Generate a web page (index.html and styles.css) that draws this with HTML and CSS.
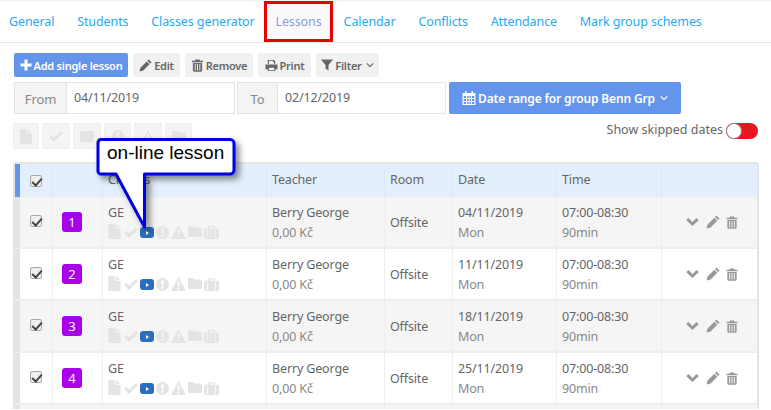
FILE: index.html
```html
<!DOCTYPE html>
<html lang="en">
<head>
<meta charset="utf-8">
<title>Lessons</title>
<link rel="stylesheet" href="styles.css">
</head>
<body>
<svg class="defs" width="0" height="0" aria-hidden="true">
  <symbol id="i-plus" viewBox="0 0 12 12"><path d="M4.5 0.5h3v4h4v3h-4v4h-3v-4h-4v-3h4z"/></symbol>
  <symbol id="i-pencil" viewBox="0 0 14 14"><path d="M10.500 .5 13.500 3.500 12 5 9 2zM8.300 2.700 11.300 5.700 4.600 12.400 .5 13.500l1.100-4.100z"/></symbol>
  <symbol id="i-trash" viewBox="0 0 12 14"><path d="M4 0.5h4l1 1.500h3v1.400H0V2h3zM1 4.200h10v8.300c0 .8-.6 1.300-1.200 1.300H2.200C1.600 13.800 1 13.300 1 12.500zM3 5.500v7h1v-7zm2.500 0v7h1v-7zm2.500 0v7h1v-7z" fill-rule="evenodd"/></symbol>
  <symbol id="i-print" viewBox="0 0 14 14"><path d="M3 1h6.500L11 2.500V5.500H9.800V3.200H8.600V2H4.200v3.500H3zM0.500 6h13v5H11v2H3v-2H0.500zM4.200 9.500v2.500h5.600V9.500z" fill-rule="evenodd"/></symbol>
  <symbol id="i-filter" viewBox="0 0 12 12"><path d="M0 .5h12L7.500 6v5.500l-3-2V6z"/></symbol>
  <symbol id="i-cal" viewBox="0 0 14 14"><path d="M3 0h1.500v2H9.500V0H11v2h2.500v12H.5V2H3zM1.700 5v2h2.300V5zm3.300 0v2h1.500V5zm2.500 0v2h1.500V5zm2.500 0v2h2.300V5zM1.700 8v2h2.300V8zm3.300 0v2h1.500V8zm2.500 0v2h1.500V8zm2.500 0v2h2.300V8zM1.700 11v2h2.300v-2zm3.300 0v2h1.500v-2zm2.500 0v2h1.500v-2zm2.500 0v2h2.300v-2z" fill-rule="evenodd"/></symbol>
  <symbol id="i-file" viewBox="0 0 13 16"><path d="M0 0h7v5h6v11H0zM8 0l5 4H8z"/></symbol>
  <symbol id="i-check" viewBox="0 0 14 11"><path d="M5 11 0 6l2.200-2.200L5 6.600 11.800 0 14 2.200z"/></symbol>
  <symbol id="i-video" viewBox="0 0 14 11"><path d="M2 0h10c1.100 0 2 .9 2 2v7c0 1.100-.9 2-2 2H2c-1.100 0-2-.9-2-2V2C0 .9.900 0 2 0z"/></symbol>
  <symbol id="i-alert" viewBox="0 0 14 14"><path d="M7 0a7 7 0 1 1 0 14A7 7 0 0 1 7 0zM5.800 2.500l.3 5.500h1.800l.3-5.500zM5.800 9.300v2.200h2.400V9.300z" fill-rule="evenodd"/></symbol>
  <symbol id="i-warn" viewBox="0 0 15 14"><path d="M7.500 0 15 14H0zM6.400 4.500l.3 5h1.600l.3-5zM6.500 10.500v2h2v-2z" fill-rule="evenodd"/></symbol>
  <symbol id="i-folder" viewBox="0 0 14 11"><path d="M1.200 0h4l1 1.500h6.600c.7 0 1.200.5 1.200 1.200v7c0 .7-.5 1.300-1.200 1.300H1.200C.5 11 0 10.400 0 9.700V1.200C0 .5.500 0 1.200 0z"/></symbol>
  <symbol id="i-case" viewBox="0 0 14 12"><path d="M4.500 0h5l1 1v1.500h2.300c.7 0 1.200.5 1.200 1.200v7c0 .7-.5 1.300-1.200 1.300H1.200C.5 12 0 11.400 0 10.700v-7c0-.7.5-1.200 1.200-1.200h2.300V1zM5 1.200v1.300h4V1.200zM3 3v8.500h.8V3zm7.200 0v8.500h.8V3z" fill-rule="evenodd"/></symbol>
  <symbol id="i-chev" viewBox="0 0 14 9"><path d="M0 2.400 2.400 0 7 4.500 11.600 0 14 2.400 7 9z"/></symbol>
  <symbol id="i-caret" viewBox="0 0 10 6"><path d="M1 1l4 4 4-4" fill="none" stroke="currentColor" stroke-width="1.400"/></symbol>
</svg>

<nav class="tabs">
  <a class="tab">General</a>
  <a class="tab">Students</a>
  <a class="tab">Classes generator</a>
  <a class="tab tab-active">Lessons</a>
  <a class="tab">Calendar</a>
  <a class="tab">Conflicts</a>
  <a class="tab">Attendance</a>
  <a class="tab">Mark group schemes</a>
</nav>

<main class="content">
  <div class="toolbar">
    <button class="btn btn-blue w-add"><svg class="ic ic-12"><use href="#i-plus"/></svg>Add single lesson</button>
    <button class="btn w-edit"><svg class="ic ic-13"><use href="#i-pencil"/></svg>Edit</button>
    <button class="btn w-remove"><svg class="ic ic-13"><use href="#i-trash"/></svg>Remove</button>
    <button class="btn w-print"><svg class="ic ic-13"><use href="#i-print"/></svg>Print</button>
    <button class="btn w-filter"><svg class="ic ic-12"><use href="#i-filter"/></svg>Filter<svg class="caret"><use href="#i-caret"/></svg></button>
  </div>

  <div class="dates">
    <div class="field w-from"><span class="addon">From</span><span class="input">04/11/2019</span></div>
    <div class="field w-to"><span class="addon">To</span><span class="input">02/12/2019</span></div>
    <button class="range"><svg class="ic ic-14"><use href="#i-cal"/></svg>Date range for group Benn Grp<svg class="caret"><use href="#i-caret"/></svg></button>
  </div>

  <div class="filters">
    <div class="flags">
      <span class="flag f1"><svg class="fi fi-file"><use href="#i-file"/></svg></span>
      <span class="flag f2"><svg class="fi fi-check"><use href="#i-check"/></svg></span>
      <span class="flag f3"><svg class="fi fi-check"><use href="#i-video"/></svg></span>
      <span class="flag f4"><svg class="fi fi-alert"><use href="#i-alert"/></svg></span>
      <span class="flag f5"><svg class="fi fi-alert"><use href="#i-warn"/></svg></span>
      <span class="flag f6"><svg class="fi fi-alert"><use href="#i-folder"/></svg></span>
    </div>
    <div class="skipped"><span>Show skipped dates</span><span class="toggle"><span class="knob"></span></span></div>
  </div>

  <table class="lessons">
    <colgroup><col class="c1"><col class="c2"><col class="c3"><col class="c4"><col class="c5"><col class="c6"><col class="c7"><col class="c8"></colgroup>
    <thead>
      <tr><th><input class="cb" type="checkbox" checked></th><th></th><th>Classes</th><th>Teacher</th><th>Room</th><th>Date</th><th>Time</th><th></th></tr>
    </thead>
    <tbody>
      <tr>
        <td class="mid"><input class="cb" type="checkbox" checked></td>
        <td class="mid"><span class="num">1</span></td>
        <td><div>GE</div><div class="status">
          <svg class="s-file"><use href="#i-file"/></svg><svg class="s-check"><use href="#i-check"/></svg><span class="online"><span class="play"></span></span><svg class="s-alert"><use href="#i-alert"/></svg><svg class="s-warn"><use href="#i-warn"/></svg><svg class="s-folder"><use href="#i-folder"/></svg><svg class="s-case"><use href="#i-case"/></svg>
        </div></td>
        <td><div>Berry George</div><div class="sub">0,00 Kč</div></td>
        <td class="mid">Offsite</td>
        <td><div>04/11/2019</div><div class="sub">Mon</div></td>
        <td><div>07:00-08:30</div><div class="sub">90min</div></td>
        <td class="mid actions"><svg class="a-chev"><use href="#i-chev"/></svg><svg class="a-pen"><use href="#i-pencil"/></svg><svg class="a-trash"><use href="#i-trash"/></svg></td>
      </tr>
      <tr>
        <td class="mid"><input class="cb" type="checkbox" checked></td>
        <td class="mid"><span class="num">2</span></td>
        <td><div>GE</div><div class="status">
          <svg class="s-file"><use href="#i-file"/></svg><svg class="s-check"><use href="#i-check"/></svg><span class="online"><span class="play"></span></span><svg class="s-alert"><use href="#i-alert"/></svg><svg class="s-warn"><use href="#i-warn"/></svg><svg class="s-folder"><use href="#i-folder"/></svg><svg class="s-case"><use href="#i-case"/></svg>
        </div></td>
        <td><div>Berry George</div><div class="sub">0,00 Kč</div></td>
        <td class="mid">Offsite</td>
        <td><div>11/11/2019</div><div class="sub">Mon</div></td>
        <td><div>07:00-08:30</div><div class="sub">90min</div></td>
        <td class="mid actions"><svg class="a-chev"><use href="#i-chev"/></svg><svg class="a-pen"><use href="#i-pencil"/></svg><svg class="a-trash"><use href="#i-trash"/></svg></td>
      </tr>
      <tr>
        <td class="mid"><input class="cb" type="checkbox" checked></td>
        <td class="mid"><span class="num">3</span></td>
        <td><div>GE</div><div class="status">
          <svg class="s-file"><use href="#i-file"/></svg><svg class="s-check"><use href="#i-check"/></svg><span class="online"><span class="play"></span></span><svg class="s-alert"><use href="#i-alert"/></svg><svg class="s-warn"><use href="#i-warn"/></svg><svg class="s-folder"><use href="#i-folder"/></svg><svg class="s-case"><use href="#i-case"/></svg>
        </div></td>
        <td><div>Berry George</div><div class="sub">0,00 Kč</div></td>
        <td class="mid">Offsite</td>
        <td><div>18/11/2019</div><div class="sub">Mon</div></td>
        <td><div>07:00-08:30</div><div class="sub">90min</div></td>
        <td class="mid actions"><svg class="a-chev"><use href="#i-chev"/></svg><svg class="a-pen"><use href="#i-pencil"/></svg><svg class="a-trash"><use href="#i-trash"/></svg></td>
      </tr>
      <tr>
        <td class="mid"><input class="cb" type="checkbox" checked></td>
        <td class="mid"><span class="num">4</span></td>
        <td><div>GE</div><div class="status">
          <svg class="s-file"><use href="#i-file"/></svg><svg class="s-check"><use href="#i-check"/></svg><span class="online"><span class="play"></span></span><svg class="s-alert"><use href="#i-alert"/></svg><svg class="s-warn"><use href="#i-warn"/></svg><svg class="s-folder"><use href="#i-folder"/></svg><svg class="s-case"><use href="#i-case"/></svg>
        </div></td>
        <td><div>Berry George</div><div class="sub">0,00 Kč</div></td>
        <td class="mid">Offsite</td>
        <td><div>25/11/2019</div><div class="sub">Mon</div></td>
        <td><div>07:00-08:30</div><div class="sub">90min</div></td>
        <td class="mid actions"><svg class="a-chev"><use href="#i-chev"/></svg><svg class="a-pen"><use href="#i-pencil"/></svg><svg class="a-trash"><use href="#i-trash"/></svg></td>
      </tr>
      <tr class="cut"><td></td><td></td><td></td><td></td><td></td><td></td><td></td><td></td></tr>
    </tbody>
  </table>
</main>

<div class="callout">
  <svg class="callout-shape" width="150" height="100" viewBox="0 0 150 100">
    <path class="callout-path" d="M4 1.500H133a4 4 0 0 1 4 4V32a4 4 0 0 1-4 4H47.500V89L19 36H4a3 3 0 0 1-3-3V5a3.500 3.500 0 0 1 3-3.500z"/>
  </svg>
  <span class="callout-text">on-line lesson</span>
</div>
</body>
</html>
```
FILE: styles.css
```css
* { box-sizing: border-box; }
html, body { margin: 0; padding: 0; }
body {
  width: 771px;
  height: 410px;
  overflow: hidden;
  position: relative;
  background: #fff;
  color: #666;
  font-family: "Noto Sans", "Open Sans", sans-serif;
  font-size: 12.5px;
  letter-spacing: -0.15px;
}
.defs { position: absolute; }
svg { fill: currentColor; display: block; }

/* tabs */
.tabs {
  display: flex;
  height: 43px;
  border-top: 1px solid #eef0f3;
  border-bottom: 1px solid #e6e6e6;
  padding-left: 1px;
}
.tab {
  position: relative;
  display: flex;
  align-items: center;
  padding: 0 8px;
  margin-right: 6.800px;
  color: #2aa7f2;
  font-size: 12.500px;
  letter-spacing: -0.1px;
}
.tab-active { color: #8a9ae8; background: #fafafa; margin: 0 3px 0 -5px; padding: 0 11px; }
.tab-active::after {
  content: "";
  position: absolute;
  inset: 0;
  border: 3px solid #e60000;
}

.content { padding: 10px 12px 0 14px; }

/* toolbar */
.toolbar { display: flex; gap: 5px; height: 24px; }
.btn {
  display: flex;
  align-items: center;
  justify-content: center;
  gap: 2px;
  height: 24px;
  padding: 0;
  border: 0;
  border-radius: 2px;
  background: #f1f1f1;
  color: #666;
  font: 600 11px "Noto Sans", sans-serif;
  letter-spacing: -0.25px;
}
.btn-blue { background: #6495ed; color: #fff; }
.w-add { width: 114px; }
.w-edit { width: 47px; }
.w-remove { width: 68px; }
.w-print { width: 53px; }
.w-filter { width: 63px; }
.ic { flex: none; }
.ic-12 { width: 12px; height: 12px; }
.ic-13 { width: 13px; height: 13px; }
.ic-14 { width: 14px; height: 14px; }
.caret { width: 8px; height: 6px; margin-left: 2px; flex: none; }

/* date row */
.dates { display: flex; margin-top: 5px; height: 32px; }
.field { display: flex; height: 32px; border: 1px solid #e4e4e4; background: #fff; }
.w-from { width: 221px; margin-right: 2px; }
.w-to { width: 209px; margin-right: 3px; }
.addon {
  display: flex;
  align-items: center;
  justify-content: center;
  padding-top: 1px;
  background: #f4f4f4;
  border-right: 1px solid #e4e4e4;
  color: #888;
  font-size: 13px;
}
.w-from .addon { width: 52px; }
.w-to .addon { width: 40px; }
.input { display: flex; align-items: center; padding: 0 0 2px 7px; font-size: 12.500px; color: #666; }
.range {
  display: flex;
  align-items: center;
  justify-content: center;
  gap: 2px;
  width: 232px;
  height: 32px;
  border: 0;
  border-radius: 2px;
  background: #6495ed;
  color: #fff;
  font: 600 12px "Noto Sans", sans-serif;
  letter-spacing: -0.15px;
  padding: 0;
}
.range .caret { margin-left: 3px; }

/* filter row */
.filters { display: flex; justify-content: space-between; margin-top: 9px; height: 39px; }
.flags { display: flex; gap: 3px; margin-left: -1px; }
.flag {
  display: flex;
  align-items: center;
  justify-content: center;
  height: 26px;
  border: 1px solid #eee;
  border-radius: 2px;
  background: #f4f4f4;
  color: #e4e4e4;
}
.f1 { width: 26px; }
.f2 { width: 28px; }
.f3 { width: 28px; }
.f4 { width: 27px; }
.f5 { width: 28px; }
.f6 { width: 27px; }
.fi-file { width: 12px; height: 15px; }
.fi-check { width: 14px; height: 11px; }
.fi-alert { width: 14px; height: 13px; }
.skipped { display: flex; align-items: flex-start; gap: 3px; margin-right: 1px; height: 16px; line-height: 14px; font-size: 12.500px; letter-spacing: 0; color: #666; }
.toggle { position: relative; display: block; width: 32px; height: 16px; border-radius: 8px; background: #e5171f; }
.knob {
  position: absolute;
  left: 0;
  top: 0;
  width: 16px;
  height: 16px;
  border-radius: 50%;
  background: #fff;
  border: 1px solid #8a8a8a;
}

/* table */
.lessons {
  width: 746px;
  margin-left: -1px;
  border-collapse: separate;
  border-spacing: 0;
  table-layout: fixed;
  border-top: 2px solid #e4e4e4;
  border-right: 2px solid #e4e4e4;
  border-radius: 3px;
  font-size: 12.500px;
}
.c1 { width: 40px; }
.c2 { width: 50px; }
.c3 { width: 164px; }
.c4 { width: 118px; }
.c5 { width: 68px; }
.c6 { width: 104px; }
.c7 { width: 105px; }
.lessons th {
  height: 33px;
  padding: 0 0 2px 5px;
  background: #e3effd;
  border-right: 1px solid #dce8f5;
  font-weight: 400;
  text-align: left;
  color: #666;
}
.lessons th:first-child {
  border-left: 2px solid #e4e4e4;
  padding: 0;
  background: linear-gradient(90deg, #6495ed 5px, #e3effd 5px);
}
.lessons th:last-child, .lessons td:last-child { border-right: 0; }
.lessons td {
  height: 52px;
  padding: 7px 0 0 5px;
  vertical-align: top;
  border-right: 1px solid #eee;
  border-bottom: 2px solid #eee;
  line-height: 17px;
  color: #666;
}
.lessons td:first-child { border-left: 7px solid #e4e4e4; padding: 0 0 2px 0; }
.lessons tbody tr:nth-child(odd) td { background: #f5f5f5; }
.lessons td.mid { vertical-align: middle; padding-top: 0; }
.lessons td:nth-child(2) { padding-left: 9px; }
.lessons .cut td { height: 4px; padding: 0; border-bottom: 0; line-height: 0; }
.cb {
  appearance: none;
  position: relative;
  display: block;
  width: 12px;
  height: 12px;
  margin: 0 0 0 10px;
  border: 1px solid #a8a8a8;
  border-radius: 2px;
  background: #eee;
}
th .cb { margin-left: 15px; }
.cb::after {
  content: "";
  position: absolute;
  left: 3px;
  top: 0;
  width: 4px;
  height: 8px;
  border-right: 2.500px solid #444;
  border-bottom: 2.500px solid #444;
  transform: rotate(42deg);
}
.num {
  display: flex;
  align-items: center;
  justify-content: center;
  width: 20px;
  height: 20px;
  border-radius: 3px;
  background: #a901e8;
  color: #fff;
  font-size: 13px;
}
.sub { margin-top: 3px; color: #888; }
.status { display: flex; align-items: flex-start; margin-top: 3px; color: #e4e4e4; height: 16px; }
.s-file { width: 13px; height: 15px; margin-right: 3px; }
.s-check { width: 14px; height: 11px; margin: 3px 2px 0 0; }
.online {
  display: flex;
  align-items: center;
  justify-content: center;
  width: 14px;
  height: 11px;
  margin: 3px 2px 0 0;
  border-radius: 3px;
  background: #2a6ebd;
}
.play { width: 0; height: 0; border-left: 3px solid #fff; border-top: 2px solid transparent; border-bottom: 2px solid transparent; }
.s-alert { width: 13px; height: 13px; margin: 2px 2px 0 0; }
.s-warn { width: 15px; height: 14px; margin: 1px 2px 0 0; }
.s-folder { width: 14px; height: 11px; margin: 2px 2px 0 0; }
.s-case { width: 15px; height: 13px; margin: 2px 0 0 0; }

.actions svg { display: inline-block; vertical-align: middle; }
.lessons td.actions { padding: 0 0 2px 24px; white-space: nowrap; color: #999; }
.a-chev { width: 13px; height: 8px; margin-right: 7px; }
.a-pen { width: 14px; height: 14px; margin-right: 6px; }
.a-trash { width: 12px; height: 13px; }

/* annotation over the table */
.callout { position: absolute; left: 97px; top: 138px; width: 150px; height: 100px; letter-spacing: 0; }
.callout-shape { position: absolute; left: 0; top: 0; overflow: visible; }
.callout-path {
  fill: #fff;
  stroke: #0000e6;
  stroke-width: 3;
  stroke-linejoin: round;
  filter: drop-shadow(4px 4px 3px rgba(0, 0, 0, 0.45));
}
.callout-text {
  position: absolute;
  left: 10px;
  top: 4px;
  font: 19px "Liberation Sans", Arial, sans-serif;
  color: #000;
  white-space: nowrap;
}
```
